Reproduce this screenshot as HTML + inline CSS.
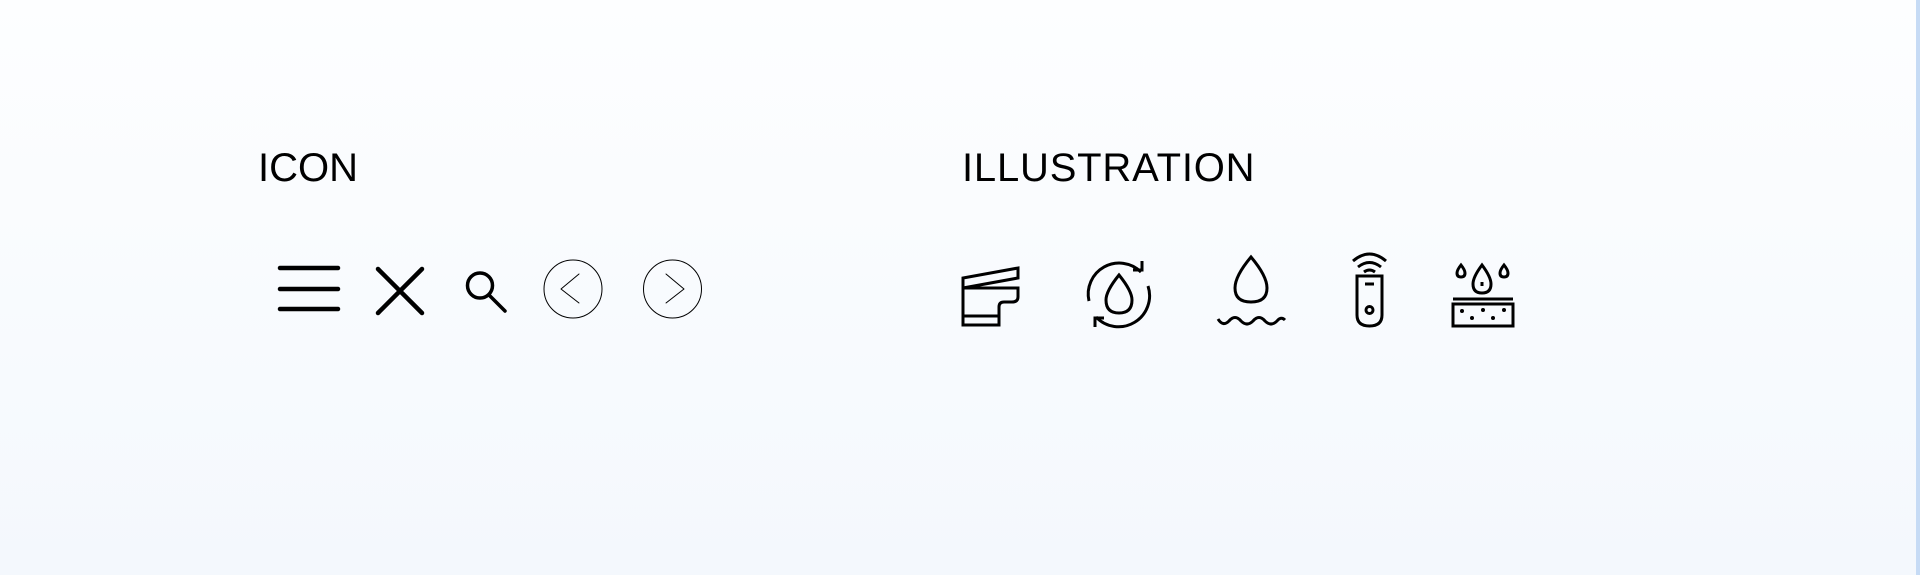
<!DOCTYPE html>
<html><head><meta charset="utf-8"><style>
html,body{margin:0;padding:0}
body{width:1920px;height:575px;overflow:hidden;position:relative;background:linear-gradient(#fdfeff,#f4f8fd);font-family:"Liberation Sans",sans-serif;}
.t{position:absolute;top:146px;font-size:40px;color:#000;line-height:44px}
.strip{position:absolute;right:0;top:0;width:4px;height:575px;background:#c6dbf5}
svg{position:absolute;left:0;top:0}
</style></head><body>
<div class="t" style="left:258px">ICON</div>
<div class="t" style="left:962px;letter-spacing:0.8px">ILLUSTRATION</div>
<div class="strip"></div>
<svg width="1920" height="575" viewBox="0 0 1920 575" fill="none" stroke="#000" stroke-linecap="round" stroke-linejoin="round">
<g stroke-width="4.5">
<path d="M280 268H338M280 289H338M280 309H338"/>
<path d="M378 269L422 313M422 269L378 313"/>
</g>
<circle cx="480" cy="285.5" r="12.5" stroke-width="3.5"/>
<path d="M489 295L505 311" stroke-width="3.5"/>
<circle cx="573" cy="289" r="29" stroke-width="1"/>
<path d="M579 274L561 289L579 303" stroke-width="1"/>
<circle cx="672.5" cy="289" r="29" stroke-width="1"/>
<path d="M666 274L684 289L666 303" stroke-width="1"/>
<g stroke-width="3" stroke-linecap="butt" stroke-linejoin="miter">
<path d="M963 290V278L1018 268V278L963 288"/>
<path d="M963 288H1018V297Q1018 302 1012 302H1004Q999 302 999 307V325H963Z"/>
<path d="M963 316H999"/>
<path d="M1089 301A31 31 0 0 1 1141 272"/>
<path d="M1148 286A31 31 0 0 1 1096 317"/>
<path d="M1133 270H1142V261M1104 318H1095V327"/>
<path d="M1119 275Q1106 291 1106 300Q1106 313 1119 313Q1132 313 1132 300Q1132 291 1119 275Z"/>
<path d="M1251 257Q1235 276 1235 288Q1235 302 1251 302Q1267 302 1267 288Q1267 276 1251 257Z"/>
<path d="M1218 319Q1223 327 1229 321Q1235 314 1241 321Q1247 327 1253 321Q1259 314 1265 321Q1271 327 1277 321Q1281 316 1285 320"/>
<path d="M1357 276H1382V315Q1382 326 1369.5 326Q1357 326 1357 315Z"/>
<path d="M1365 284H1374"/>
<circle cx="1369.5" cy="310" r="3.5"/>
<path d="M1353 261Q1369.5 247 1386 261M1358 267Q1369.5 258 1381 267M1364 272Q1369.5 268 1375 272"/>
<path d="M1453 299H1513M1453 304H1513V326H1453Z"/>
<path d="M1482 265Q1473 277 1473 284Q1473 293 1482 293Q1491 293 1491 284Q1491 277 1482 265Z"/>
<path d="M1482 282V286"/>
<path d="M1461 265Q1457 270 1457 273Q1457 277 1461 277Q1465 277 1465 273Q1465 270 1461 265Z"/>
<path d="M1504 265Q1500 270 1500 273Q1500 277 1504 277Q1508 277 1508 273Q1508 270 1504 265Z"/>
</g>
<g fill="#000" stroke="none">
<circle cx="1462" cy="311" r="2"/><circle cx="1483" cy="310" r="2"/><circle cx="1504" cy="310" r="2"/>
<circle cx="1472" cy="318" r="2"/><circle cx="1493" cy="318" r="2"/>
</g>
</svg>
</body></html>
